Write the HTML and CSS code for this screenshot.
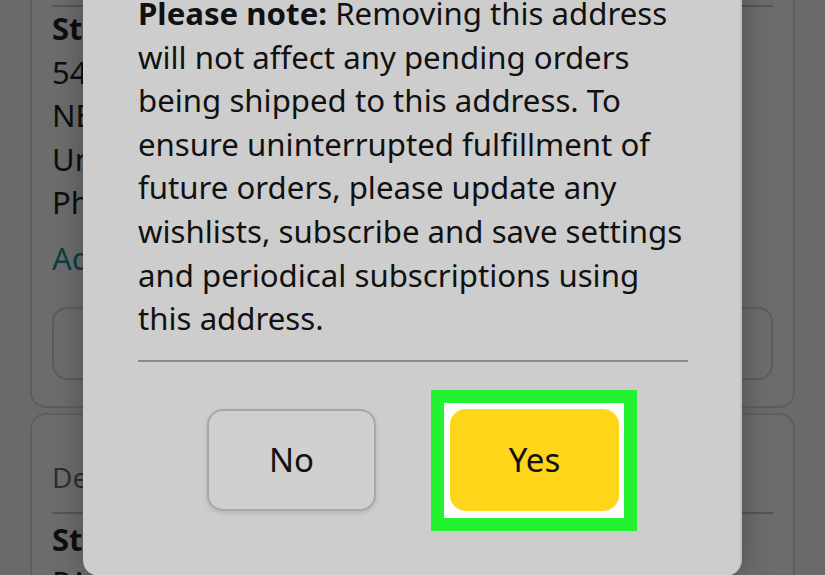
FILE: index.html
```html
<!DOCTYPE html>
<html lang="en">
<head>
<meta charset="utf-8">
<title>Remove address</title>
<link rel="stylesheet" href="styles.css">
</head>
<body>
<div class="page">
  <div class="card card-first">
    <div class="rule"></div>
    <div class="line bold">Stephanie</div>
    <div class="line">5432 Main St</div>
    <div class="line">NEW YORK</div>
    <div class="line">United States</div>
    <div class="line">Phone</div>
    <div class="line link">Add</div>
    <div class="ghost-btn"></div>
  </div>
  <div class="card card-second">
    <div class="line muted">Default</div>
    <div class="rule rule-mid"></div>
    <div class="line bold">Stephanie</div>
    <div class="line">PARK AVE</div>
  </div>

  <div class="dialog">
    <p class="note"><b>Please note:</b> Removing this address<br>will not affect any pending orders<br>being shipped to this address. To<br>ensure uninterrupted fulfillment of<br>future orders, please update any<br>wishlists, subscribe and save settings<br>and periodical subscriptions using<br>this address.</p>
    <div class="divider"></div>
    <div class="actions">
      <button class="btn btn-no">No</button>
      <button class="btn btn-yes">Yes</button>
    </div>
  </div>
</div>
</body>
</html>
```

FILE: styles.css
```css
html, body {
  margin: 0;
  padding: 0;
}
body {
  width: 825px;
  height: 575px;
  overflow: hidden;
  background: #6a6a6a;
  font-family: "Noto Sans", "Open Sans", sans-serif;
}
.page {
  position: relative;
  width: 825px;
  height: 575px;
  overflow: hidden;
  padding-left: 30px;
  box-sizing: border-box;
  display: flex;
  flex-direction: column;
  gap: 5px;
}
.card {
  flex-shrink: 0;
  width: 765px;
  box-sizing: border-box;
  border: 2px solid #5e5e5e;
  border-radius: 16px;
  background: #6c6c6c;
  padding: 0 20px;
  display: flex;
  flex-direction: column;
}
.card-first {
  margin-top: -30px;
  height: 438px;
  padding-top: 33px;
}
.card-second {
  padding-top: 41px;
  height: 200px;
}
.rule {
  flex-shrink: 0;
  height: 2px;
  width: 721px;
  background: #555;
}
.rule-mid {
  margin: 12px 0 4px;
}
.line {
  flex-shrink: 0;
  font-size: 31px;
  line-height: 43.5px;
  color: #0e0e0e;
  white-space: nowrap;
}
.bold { font-weight: 700; }
.link {
  color: #0b3d45;
  margin-top: 12px;
}
.muted {
  color: #2e2e2e;
  font-size: 28px;
}
.ghost-btn {
  flex-shrink: 0;
  margin-top: 27px;
  height: 73px;
  width: 721px;
  box-sizing: border-box;
  border: 2px solid #5d5d5d;
  border-radius: 15px;
}
.dialog {
  position: absolute;
  z-index: 1;
  left: 83px;
  top: -40px;
  width: 659px;
  height: 616px;
  box-sizing: border-box;
  background: #cdcdcd;
  border-radius: 16px;
  border-right: 2px solid #bdbdbd;
  box-shadow: 0 0 30px rgba(0, 0, 0, 0.28);
  padding: 32px 52px 0 55px;
}
.note {
  margin: 0;
  font-size: 31.2px;
  line-height: 43.6px;
  color: #111;
  white-space: nowrap;
}
.note b { font-weight: 700; }
.divider {
  margin-top: 19px;
  height: 2px;
  width: 550px;
  background: #8b8b8b;
}
.actions {
  margin-top: 47px;
  width: 550px;
  display: flex;
  justify-content: center;
  gap: 74px;
}
.btn {
  width: 169px;
  height: 102px;
  box-sizing: border-box;
  border-radius: 16px;
  font-family: "Noto Sans", "Open Sans", sans-serif;
  font-size: 33px;
  color: #111;
  padding: 0;
}
.btn-no {
  background: #cfcfcf;
  border: 2px solid #a8a8a8;
  box-shadow: 0 2px 5px rgba(0, 0, 0, 0.12);
}
.btn-yes {
  position: relative;
  background: #fed519;
  border: none;
}
.btn-yes::before {
  content: "";
  position: absolute;
  z-index: -1;
  left: -19px;
  top: -19px;
  right: -18px;
  bottom: -20px;
  border: 13px solid #22f230;
  background: #fdfdfd;
}
```
